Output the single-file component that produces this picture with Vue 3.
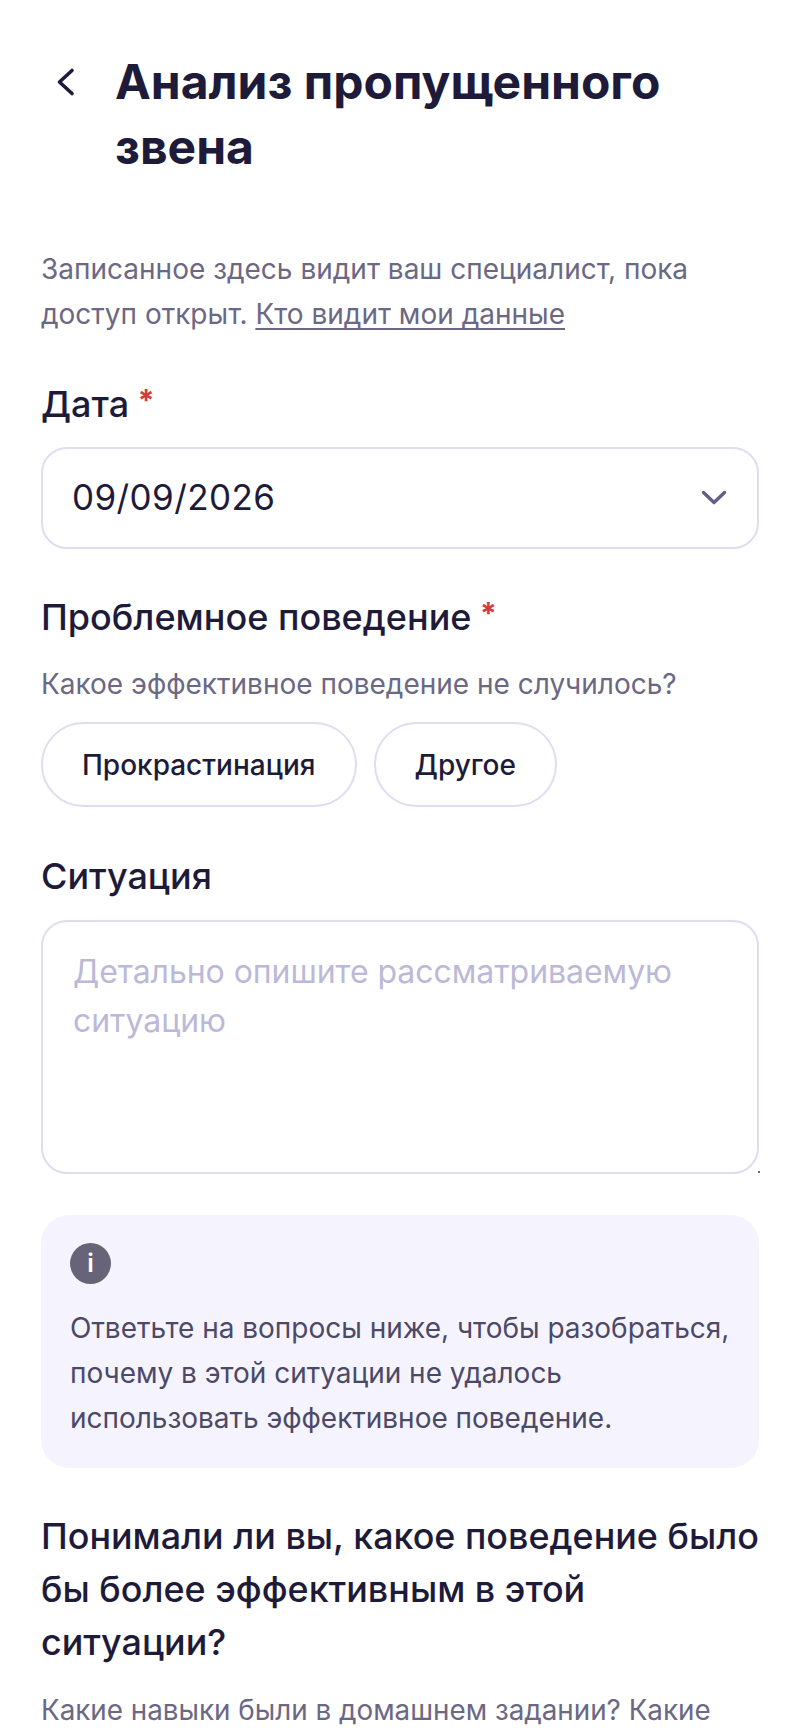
<template>
  <div class="page">
    <header class="top">
      <button class="back" aria-label="Назад">
        <svg width="24" height="36" viewBox="0 0 24 36" fill="none">
          <path d="M21 6.5 L8.5 18 L21 29.5" stroke="#1e1b3a" stroke-width="3.6" stroke-linecap="round" stroke-linejoin="round" />
        </svg>
      </button>
      <h1 class="title">Анализ пропущенного звена</h1>
    </header>

    <p class="note">
      Записанное здесь видит ваш специалист, пока доступ открыт.
      <a class="note__link">Кто видит мои данные</a>
    </p>

    <section class="field field--date">
      <div class="label">Дата <span class="req">*</span></div>
      <div class="select">
        <span>09/09/2026</span>
        <svg width="26" height="18" viewBox="0 0 26 18" fill="none">
          <path d="M2.5 3.5 L13 13.5 L23.5 3.5" stroke="#655f88" stroke-width="3.4" stroke-linecap="round" stroke-linejoin="round" />
        </svg>
      </div>
    </section>

    <section class="field field--problem">
      <div class="label">Проблемное поведение <span class="req">*</span></div>
      <div class="hint">Какое эффективное поведение не случилось?</div>
      <div class="chips">
        <button v-for="c in chips" :key="c" class="chip">{{ c }}</button>
      </div>
    </section>

    <section class="field field--situation">
      <div class="label">Ситуация</div>
      <div class="textarea">
        <div class="placeholder">Детально опишите рассматриваемую ситуацию</div>
        <span class="grip"></span>
      </div>
    </section>

    <aside class="info">
      <div class="info__icon">i</div>
      <p class="info__text">Ответьте на вопросы ниже, чтобы разобраться, почему в этой ситуации не удалось использовать эффективное поведение.</p>
    </aside>

    <section class="question">
      <h2 class="question__title">Понимали ли вы, какое поведение было бы более эффективным в этой ситуации?</h2>
      <p class="question__hint">Какие навыки были в домашнем задании? Какие</p>
    </section>
  </div>
</template>

<script setup>
const chips = ['Прокрастинация', 'Другое']
</script>

<style>
html, body {
  background: #fff;
}
</style>

<style scoped>
.page {
  box-sizing: border-box;
  width: 800px;
  height: 1731px;
  overflow: hidden;
  padding: 49px 41px 0;
  background: #fff;
  font-family: Inter, "Noto Sans", sans-serif;
  color: #1e1b3a;
}

.top {
  display: flex;
  align-items: flex-start;
}

.back {
  flex: none;
  width: 74px;
  height: 65px;
  padding: 0 0 0 10px;
  border: 0;
  background: none;
  display: flex;
  align-items: center;
}

.title {
  margin: 0;
  font-size: 48px;
  line-height: 65px;
  font-weight: 700;
  width: 620px;
}

.note {
  margin: 68px 0 0;
  font-size: 28px;
  line-height: 45px;
  color: #6b6885;
}

.note__link {
  text-decoration: underline;
  text-underline-offset: 4px;
  text-decoration-thickness: 2px;
}

.label {
  font-size: 36px;
  line-height: 46px;
  font-weight: 500;
}

.req {
  margin-left: -1px;
  color: #d63a3a;
  font-size: 30px;
  font-weight: 700;
  vertical-align: 6px;
}

.field--date {
  margin-top: 40px;
}

.select {
  box-sizing: border-box;
  height: 102px;
  margin-top: 20px;
  padding: 0 30px 2px 29px;
  display: flex;
  align-items: center;
  justify-content: space-between;
  border: 2px solid #dfddf1;
  border-radius: 26px;
  font-size: 35px;
  letter-spacing: 0.4px;
}

.select svg {
  margin-top: 2px;
}

.field--problem {
  margin-top: 41px;
}

.hint {
  margin-top: 24px;
  font-size: 28px;
  line-height: 40px;
  color: #6b6885;
}

.chips {
  display: flex;
  gap: 17px;
  margin-top: 18px;
}

.chip {
  box-sizing: border-box;
  height: 85px;
  padding: 0 39px;
  border: 2px solid #dfddf1;
  border-radius: 43px;
  background: #fff;
  font: 500 28px Inter, "Noto Sans", sans-serif;
  color: #1e1b3a;
}

.field--situation {
  margin-top: 46px;
}

.textarea {
  position: relative;
  box-sizing: border-box;
  height: 254px;
  margin-top: 21px;
  padding: 25px 30px;
  border: 2px solid #dfddf1;
  border-radius: 26px;
}

.placeholder {
  font-size: 32px;
  letter-spacing: -0.05px;
  line-height: 49px;
  color: #bcb9d8;
}

.grip {
  position: absolute;
  right: -3px;
  bottom: -1px;
  width: 2px;
  height: 2px;
  background: #6b6885;
}

.info {
  box-sizing: border-box;
  height: 253px;
  margin-top: 41px;
  padding: 28px 24px 0 29px;
  background: #f5f4fe;
  border-radius: 28px;
}

.info__icon {
  width: 41px;
  height: 41px;
  border-radius: 50%;
  background: #676379;
  color: #fff;
  font-size: 25px;
  font-weight: 600;
  line-height: 41px;
  text-align: center;
}

.info__text {
  margin: 22px 0 0;
  font-size: 28px;
  line-height: 45px;
  letter-spacing: -0.02px;
  color: #4c4968;
}

.question {
  margin-top: 42px;
}

.question__title {
  margin: 0 -12px 0 0;
  font-size: 35.9px;
  line-height: 53px;
  font-weight: 500;
}

.question__hint {
  margin: 19px 0 0;
  font-size: 27.8px;
  line-height: 45px;
  color: #6b6885;
}
</style>
